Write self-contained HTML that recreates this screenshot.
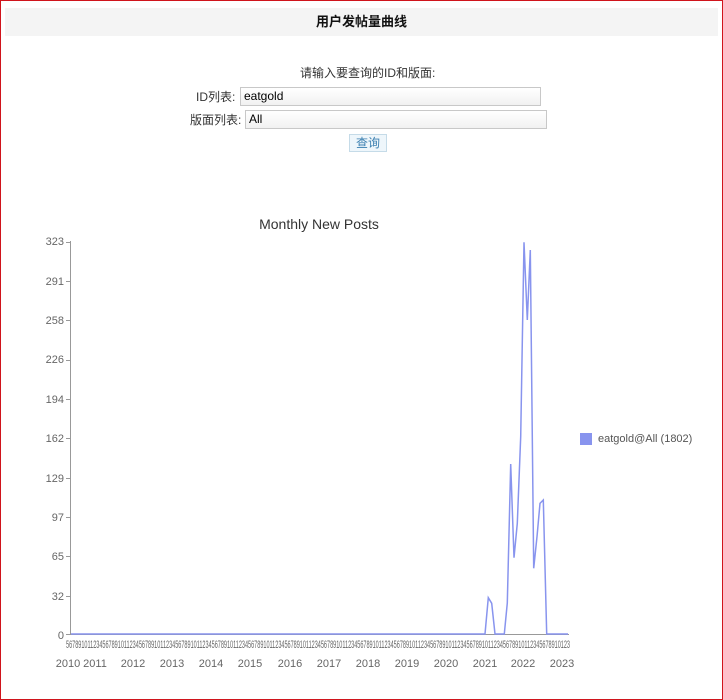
<!DOCTYPE html>
<html><head><meta charset="utf-8"><style>
body{margin:0;width:723px;height:700px;overflow:hidden;background:#fff;font-family:"Liberation Sans","Noto Sans CJK SC",sans-serif;}
.frame{position:absolute;left:0;top:0;width:721px;height:698px;border:1px solid #d0141c;}
.hdr{position:absolute;left:5px;top:8px;width:713px;height:28px;background:#f4f4f4;text-align:center;line-height:28px;font-size:13px;font-weight:bold;color:#111;}
.t{position:absolute;font-size:12px;color:#333;white-space:nowrap;}
.inp{position:absolute;height:17px;border:1px solid #c8c8c8;background:linear-gradient(#fff,#f1f1f1);font-size:12px;line-height:17px;padding-left:3px;color:#000;box-sizing:border-box;height:19px;}
.btn{position:absolute;left:349px;top:134px;width:38px;height:18px;border:1px solid #c5dbe8;background:#eef6fb;color:#3a7fb0;font-size:12px;text-align:center;line-height:17px;box-sizing:border-box;}
svg text{font-family:"Liberation Sans",sans-serif;}
</style></head><body>
<div class="frame"></div>
<div class="hdr">用户发帖量曲线</div>
<div class="t" style="left:300px;top:64px">请输入要查询的ID和版面:</div>
<div class="t" style="left:196px;top:88px">ID列表:</div>
<div class="inp" style="left:240px;top:87px;width:301px">eatgold</div>
<div class="t" style="left:190px;top:111px">版面列表:</div>
<div class="inp" style="left:245px;top:110px;width:302px">All</div>
<div class="btn">查询</div>
<svg width="723" height="700" style="position:absolute;left:0;top:0">
<text x="319" y="229" font-size="14" fill="#333" text-anchor="middle">Monthly New Posts</text>
<g font-size="11" fill="#666" text-anchor="end">
<text x="64" y="245">323</text><text x="64" y="285">291</text><text x="64" y="324">258</text><text x="64" y="363">226</text><text x="64" y="403">194</text><text x="64" y="442">162</text><text x="64" y="482">129</text><text x="64" y="521">97</text><text x="64" y="560">65</text><text x="64" y="600">32</text><text x="64" y="639">0</text>
</g>
<g stroke="#999" stroke-width="1">
<line x1="70.5" y1="241" x2="70.5" y2="635"/><line x1="66" y1="634.5" x2="569" y2="634.5"/>
<line x1="66" y1="242.5" x2="70" y2="242.5"/><line x1="66" y1="281.5" x2="70" y2="281.5"/><line x1="66" y1="320.5" x2="70" y2="320.5"/><line x1="66" y1="360.5" x2="70" y2="360.5"/><line x1="66" y1="399.5" x2="70" y2="399.5"/><line x1="66" y1="438.5" x2="70" y2="438.5"/><line x1="66" y1="478.5" x2="70" y2="478.5"/><line x1="66" y1="517.5" x2="70" y2="517.5"/><line x1="66" y1="556.5" x2="70" y2="556.5"/><line x1="66" y1="596.5" x2="70" y2="596.5"/>
</g>
<polyline fill="none" stroke="#8894ee" stroke-width="1.5" points="71,634 485,634 488.3,597.7 491.7,603.3 495,634 504.3,634 507.3,603 510.7,464 514,557.7 517.3,523.3 520.7,436.7 524,242.3 527.3,320 530.3,250 533.7,568.3 537,536.7 540,503.3 543.3,500 546.7,634 568,634"/>
<text x="318" y="648" font-size="11" fill="#666" text-anchor="middle" textLength="504" lengthAdjust="spacingAndGlyphs">5678910112345678910112345678910112345678910112345678910112345678910112345678910112345678910112345678910112345678910112345678910112345678910112345678910112345678910123</text>
<g font-size="11" fill="#666" text-anchor="middle">
<text x="68" y="667">2010</text><text x="95" y="667">2011</text><text x="133" y="667">2012</text><text x="172" y="667">2013</text><text x="211" y="667">2014</text><text x="250" y="667">2015</text><text x="290" y="667">2016</text><text x="329" y="667">2017</text><text x="368" y="667">2018</text><text x="407" y="667">2019</text><text x="446" y="667">2020</text><text x="485" y="667">2021</text><text x="523" y="667">2022</text><text x="562" y="667">2023</text>
</g>
<rect x="580" y="433" width="12" height="12" fill="#8894ee"/>
<text x="598" y="442" font-size="11" fill="#555">eatgold@All (1802)</text>
</svg>
</body></html>
